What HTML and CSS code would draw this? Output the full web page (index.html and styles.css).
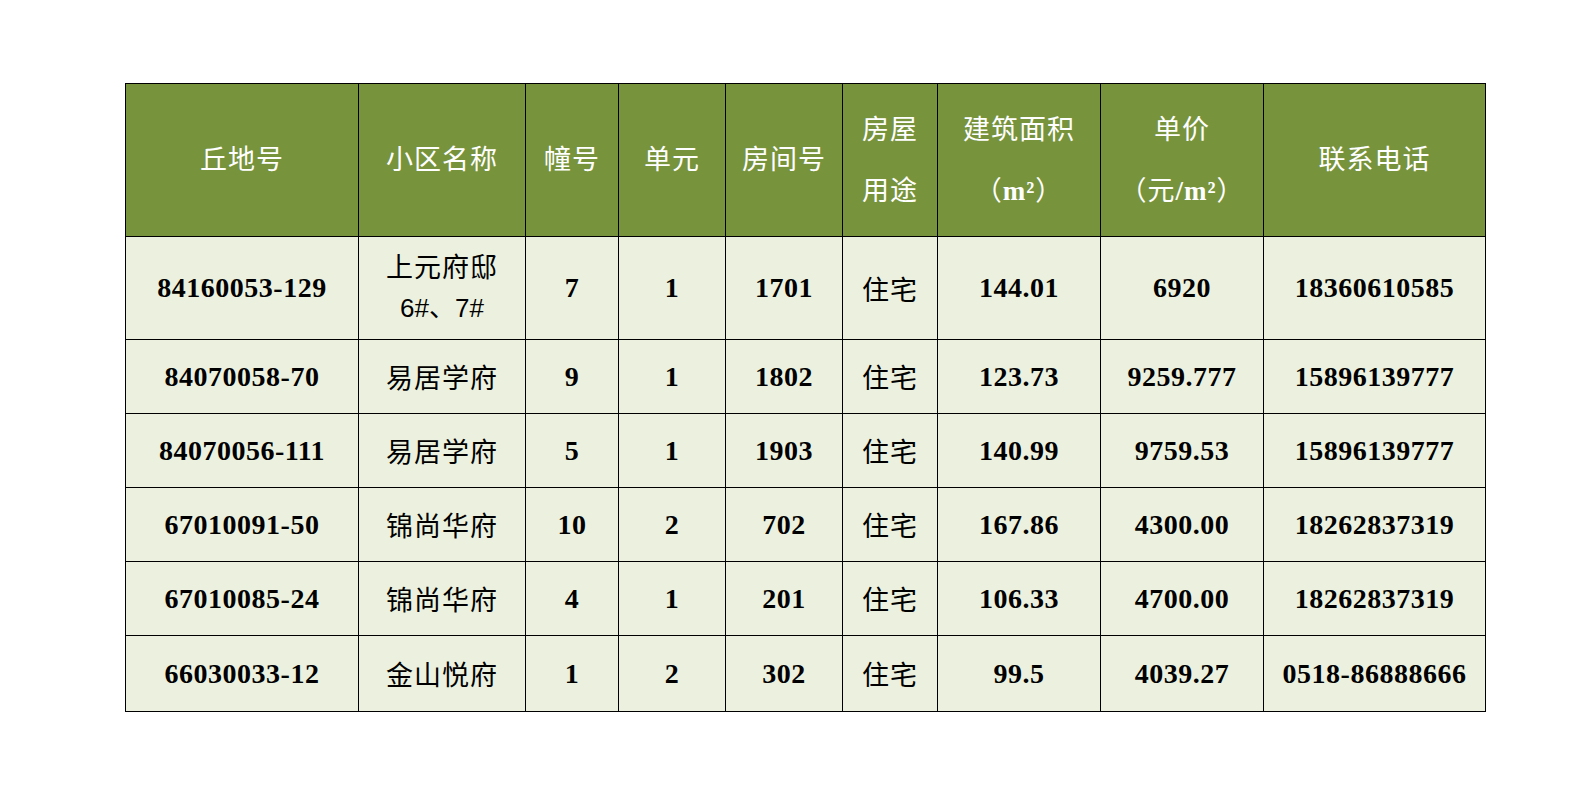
FILE: index.html
```html
<!DOCTYPE html>
<html lang="zh-CN">
<head>
<meta charset="utf-8">
<title>房源信息</title>
<link rel="stylesheet" href="styles.css">
</head>
<body>
<table class="grid">
  <colgroup>
    <col class="c1"><col class="c2"><col class="c3"><col class="c4"><col class="c5"><col class="c6"><col class="c7"><col class="c8"><col class="c9">
  </colgroup>
  <thead>
    <tr class="head">
      <th>丘地号</th>
      <th>小区名称</th>
      <th>幢号</th>
      <th>单元</th>
      <th>房间号</th>
      <th><span class="two">房屋<br>用途</span></th>
      <th><span class="two">建筑面积<br><span class="unit">（<b>m²</b>）</span></span></th>
      <th><span class="two">单价<br><span class="unit">（元<b>/m²</b>）</span></span></th>
      <th>联系电话</th>
    </tr>
  </thead>
  <tbody>
    <tr class="tall">
      <td class="num">84160053-129</td>
      <td class="cn"><span class="stack">上元府邸<br><span class="narrow">6#、7#</span></span></td>
      <td class="num">7</td>
      <td class="num">1</td>
      <td class="num">1701</td>
      <td class="cn">住宅</td>
      <td class="num">144.01</td>
      <td class="num">6920</td>
      <td class="num">18360610585</td>
    </tr>
    <tr class="row">
      <td class="num">84070058-70</td>
      <td class="cn">易居学府</td>
      <td class="num">9</td>
      <td class="num">1</td>
      <td class="num">1802</td>
      <td class="cn">住宅</td>
      <td class="num">123.73</td>
      <td class="num">9259.777</td>
      <td class="num">15896139777</td>
    </tr>
    <tr class="row">
      <td class="num">84070056-111</td>
      <td class="cn">易居学府</td>
      <td class="num">5</td>
      <td class="num">1</td>
      <td class="num">1903</td>
      <td class="cn">住宅</td>
      <td class="num">140.99</td>
      <td class="num">9759.53</td>
      <td class="num">15896139777</td>
    </tr>
    <tr class="row">
      <td class="num">67010091-50</td>
      <td class="cn">锦尚华府</td>
      <td class="num">10</td>
      <td class="num">2</td>
      <td class="num">702</td>
      <td class="cn">住宅</td>
      <td class="num">167.86</td>
      <td class="num">4300.00</td>
      <td class="num">18262837319</td>
    </tr>
    <tr class="row">
      <td class="num">67010085-24</td>
      <td class="cn">锦尚华府</td>
      <td class="num">4</td>
      <td class="num">1</td>
      <td class="num">201</td>
      <td class="cn">住宅</td>
      <td class="num">106.33</td>
      <td class="num">4700.00</td>
      <td class="num">18262837319</td>
    </tr>
    <tr class="last">
      <td class="num">66030033-12</td>
      <td class="cn">金山悦府</td>
      <td class="num">1</td>
      <td class="num">2</td>
      <td class="num">302</td>
      <td class="cn">住宅</td>
      <td class="num">99.5</td>
      <td class="num">4039.27</td>
      <td class="num">0518-86888666</td>
    </tr>
  </tbody>
</table>
</body>
</html>
```
FILE: styles.css
```css
html, body {
  margin: 0;
  padding: 0;
  background: #ffffff;
}
body {
  padding: 83px 0 0 125px;
  font-family: "Liberation Serif", "Noto Sans CJK SC", serif;
  color: #000;
}
.grid {
  border-collapse: collapse;
  table-layout: fixed;
  width: 1360px;
}
.c1 { width: 233px; }
.c2 { width: 167px; }
.c3 { width: 93px; }
.c4 { width: 107px; }
.c5 { width: 117px; }
.c6 { width: 95px; }
.c7 { width: 163px; }
.c8 { width: 163px; }
.c9 { width: 222px; }
.grid th, .grid td {
  border: 1px solid #000;
  padding: 0;
  text-align: center;
  vertical-align: middle;
}
.grid th {
  background: #77933c;
  color: #ffffff;
  font-weight: 400;
  font-size: 27px;
  line-height: 34px;
  letter-spacing: 1px;
}
.head { height: 153px; }
.tall { height: 103px; }
.row { height: 74px; }
.last { height: 76px; }
.two {
  display: inline-block;
  line-height: 61px;
  padding-top: 2px;
}
.unit b {
  font-weight: 700;
}
.grid td {
  background: #ebf1de;
}
.num {
  font-size: 28px;
  font-weight: 700;
  letter-spacing: 0.5px;
  padding-top: 2px;
}
.cn {
  font-size: 27px;
  font-weight: 400;
  letter-spacing: 1px;
}
.stack {
  display: inline-block;
  line-height: 40px;
}
.narrow {
  font-family: "Liberation Sans", "Noto Sans CJK SC", sans-serif;
  font-size: 26px;
  letter-spacing: 0;
}
```
